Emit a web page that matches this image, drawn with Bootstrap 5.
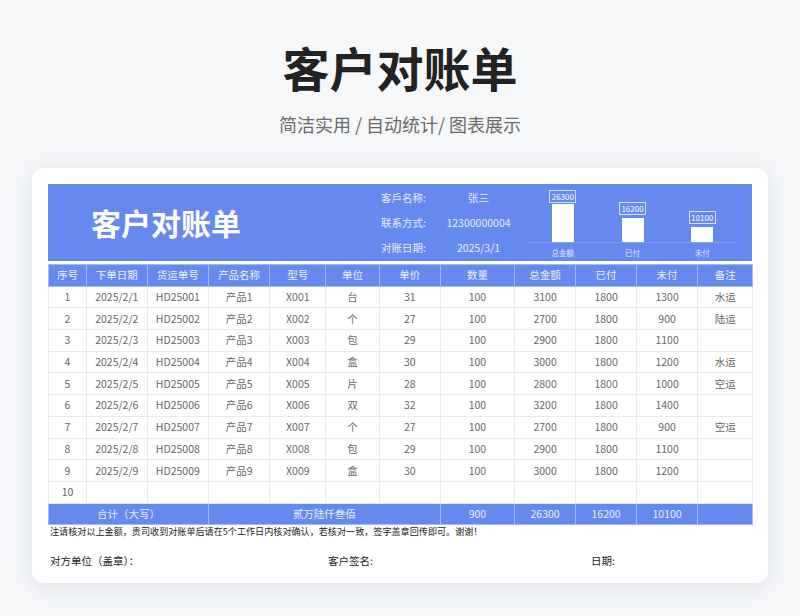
<!DOCTYPE html>
<html lang="zh-CN">
<head>
<meta charset="utf-8">
<title>客户对账单</title>
<link href="https://cdn.jsdelivr.net/npm/bootstrap@5.3.0/dist/css/bootstrap.min.css" rel="stylesheet">
<style>
html,body{height:616px;overflow:hidden}
body{background:#f5f7f9;font-family:"Noto Sans CJK SC","Noto Sans",sans-serif;color:#222}
.hero{height:168px;padding-top:33px}
.hero-title{font-size:47px;font-weight:700;line-height:68px;margin:0;color:#222;letter-spacing:0}
.hero-sub{font-size:18px;line-height:28px;color:#6a6a6a;margin-top:9px}
.sheet-card{margin:0 32px;height:415px;background:#fff;border-radius:12px;padding:16px;box-shadow:0 4px 24px rgba(120,135,150,.18)}
.banner{height:77px;background:#6689f0;color:#fff}
.banner-title{width:333px;padding:0 0 2px 43px;font-size:30px;font-weight:700;line-height:1}
.info-col{width:147px;font-size:10.5px;color:#e6ecfd;padding-top:1px}
.info-row{height:25.5px}
.info-label{width:50px;white-space:nowrap}
.info-val{width:95px;text-align:center;white-space:nowrap}
.chart-col{width:209px;padding-top:6px}
.chart-plot{height:53px;border-bottom:1px solid #7f9df5}
.chart-item{flex:1 1 0;display:flex;flex-direction:column;align-items:center;justify-content:flex-end}
.chart-tag{border:1px solid rgba(255,255,255,.75);font-size:8px;line-height:11px;width:27px;text-align:center;margin-bottom:1px}
.chart-item + .chart-item .chart-tag{margin-bottom:3px}
.chart-bar{width:22px;background:#fff}
.chart-name{flex:1 1 0;text-align:center;font-size:7.5px;line-height:10px;padding-top:5px;color:#dfe6fc}
.sheet-table{table-layout:fixed;width:704px;margin:3px 0 0;border-collapse:collapse;font-size:10.5px}
.sheet-table td,.sheet-table th{padding:0;height:21.7px;line-height:14px;text-align:center;vertical-align:middle;border:1px solid #e8eaed;color:#666;font-weight:400;white-space:nowrap;background:#fff;box-shadow:none}
.sheet-table thead th,.sheet-table tfoot td{background:#6689f0;color:#e9eefd;border-color:#a3b8f6}
.sheet-note{font-size:9.1px;line-height:13px;color:#222;padding:0 0 0 2px;white-space:nowrap}
.sign-row{font-size:10.5px;color:#222;padding:15px 0 0 2px}
.sign-a{width:278px}
.sign-b{width:263px}
</style>
</head>
<body>
<header class="hero text-center">
  <h1 class="hero-title">客户对账单</h1>
  <div class="hero-sub">简洁实用 / 自动统计/ 图表展示</div>
</header>
<main class="sheet-card">
  <section class="banner d-flex">
    <div class="banner-title d-flex align-items-center">客户对账单</div>
    <div class="info-col d-flex flex-column justify-content-center">
      <div class="info-row d-flex align-items-center"><span class="info-label">客戶名称:</span><span class="info-val">张三</span></div>
      <div class="info-row d-flex align-items-center"><span class="info-label">联系方式:</span><span class="info-val">12300000004</span></div>
      <div class="info-row d-flex align-items-center"><span class="info-label">对账日期:</span><span class="info-val">2025/3/1</span></div>
    </div>
    <div class="chart-col">
      <div class="chart-plot d-flex">
        <div class="chart-item"><div class="chart-tag">26300</div><div class="chart-bar" style="height:39px"></div></div>
        <div class="chart-item"><div class="chart-tag">16200</div><div class="chart-bar" style="height:24px"></div></div>
        <div class="chart-item"><div class="chart-tag">10100</div><div class="chart-bar" style="height:15px"></div></div>
      </div>
      <div class="d-flex">
        <div class="chart-name">总金额</div>
        <div class="chart-name">已付</div>
        <div class="chart-name">未付</div>
      </div>
    </div>
  </section>
  <table class="table sheet-table">
    <colgroup>
      <col style="width:38px"><col style="width:60.6px"><col style="width:61.4px"><col style="width:61.3px"><col style="width:56px"><col style="width:53.5px"><col style="width:61px"><col style="width:74.3px"><col style="width:61px"><col style="width:61px"><col style="width:61px"><col style="width:55.4px">
    </colgroup>
    <thead>
      <tr><th>序号</th><th>下单日期</th><th>货运单号</th><th>产品名称</th><th>型号</th><th>单位</th><th>单价</th><th>数量</th><th>总金额</th><th>已付</th><th>未付</th><th>备注</th></tr>
    </thead>
    <tbody>
      <tr><td>1</td><td>2025/2/1</td><td>HD25001</td><td>产品1</td><td>X001</td><td>台</td><td>31</td><td>100</td><td>3100</td><td>1800</td><td>1300</td><td>水运</td></tr>
      <tr><td>2</td><td>2025/2/2</td><td>HD25002</td><td>产品2</td><td>X002</td><td>个</td><td>27</td><td>100</td><td>2700</td><td>1800</td><td>900</td><td>陆运</td></tr>
      <tr><td>3</td><td>2025/2/3</td><td>HD25003</td><td>产品3</td><td>X003</td><td>包</td><td>29</td><td>100</td><td>2900</td><td>1800</td><td>1100</td><td></td></tr>
      <tr><td>4</td><td>2025/2/4</td><td>HD25004</td><td>产品4</td><td>X004</td><td>盒</td><td>30</td><td>100</td><td>3000</td><td>1800</td><td>1200</td><td>水运</td></tr>
      <tr><td>5</td><td>2025/2/5</td><td>HD25005</td><td>产品5</td><td>X005</td><td>片</td><td>28</td><td>100</td><td>2800</td><td>1800</td><td>1000</td><td>空运</td></tr>
      <tr><td>6</td><td>2025/2/6</td><td>HD25006</td><td>产品6</td><td>X006</td><td>双</td><td>32</td><td>100</td><td>3200</td><td>1800</td><td>1400</td><td></td></tr>
      <tr><td>7</td><td>2025/2/7</td><td>HD25007</td><td>产品7</td><td>X007</td><td>个</td><td>27</td><td>100</td><td>2700</td><td>1800</td><td>900</td><td>空运</td></tr>
      <tr><td>8</td><td>2025/2/8</td><td>HD25008</td><td>产品8</td><td>X008</td><td>包</td><td>29</td><td>100</td><td>2900</td><td>1800</td><td>1100</td><td></td></tr>
      <tr><td>9</td><td>2025/2/9</td><td>HD25009</td><td>产品9</td><td>X009</td><td>盒</td><td>30</td><td>100</td><td>3000</td><td>1800</td><td>1200</td><td></td></tr>
      <tr><td>10</td><td></td><td></td><td></td><td></td><td></td><td></td><td></td><td></td><td></td><td></td><td></td></tr>
    </tbody>
    <tfoot>
      <tr><td colspan="3">合计（大写）</td><td colspan="4">贰万陆仟叁佰</td><td>900</td><td>26300</td><td>16200</td><td>10100</td><td></td></tr>
    </tfoot>
  </table>
  <p class="sheet-note m-0">注请核对以上金额，贵司收到对账单后请在5个工作日内核对确认，若核对一致，签字盖章回传即可。谢谢！</p>
  <div class="sign-row d-flex">
    <div class="sign-a">对方单位（盖章）：</div>
    <div class="sign-b">客户签名:</div>
    <div>日期:</div>
  </div>
</main>
<script src="https://cdn.jsdelivr.net/npm/bootstrap@5.3.0/dist/js/bootstrap.bundle.min.js"></script>
</body>
</html>
